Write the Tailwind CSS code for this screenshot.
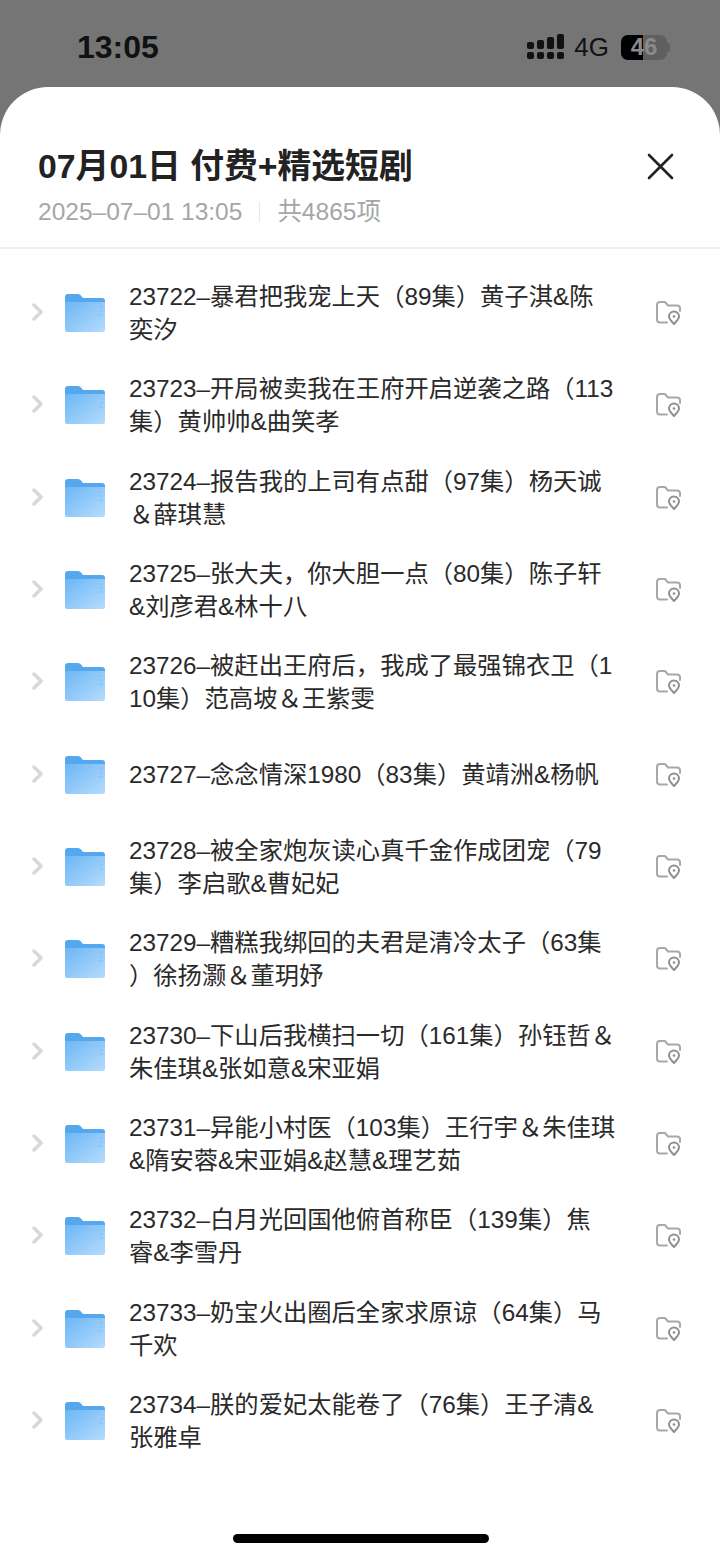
<!DOCTYPE html>
<html lang="zh-CN">
<head>
    <meta charset="UTF-8">
    <meta name="viewport" content="width=device-width, initial-scale=1.0">
    <title>07月01日 付费+精选短剧</title>
    <script src="https://cdn.jsdelivr.net/npm/@tailwindcss/browser@4"></script>
</head>
<body class="bg-[#757575] font-['Liberation_Sans','Noto_Sans_CJK_SC',sans-serif]">
<div class="w-[720px] h-[1558px] overflow-hidden flex flex-col relative">

    <!-- status bar -->
    <div class="h-[87px] shrink-0 flex items-start justify-between pl-[77px] pr-[50px] pt-[29px] text-[#111]">
        <span class="text-[32px] leading-[37px] font-bold">13:05</span>
        <div class="flex items-center gap-[12px] pt-[5px]">
            <svg class="mr-[-2px]" width="37" height="26" viewBox="0 0 37 26" fill="#111">
                <rect x="0" y="8" width="7" height="7" rx="2"/><rect x="10" y="6" width="7" height="9" rx="2"/><rect x="20" y="3" width="7" height="12" rx="2"/><rect x="30" y="0" width="7" height="15" rx="2"/>
                <rect x="0" y="18" width="7" height="7" rx="2"/><rect x="10" y="18" width="7" height="7" rx="2"/><rect x="20" y="18" width="7" height="7" rx="2"/><rect x="30" y="18" width="7" height="7" rx="2"/>
            </svg>
            <span class="text-[26px] leading-[26px]">4G</span>
            <div class="flex items-center">
                <div class="relative w-[46px] h-[25px] rounded-[7px] bg-[#5f5f5f]">
                    <div class="w-[22px] h-full rounded-l-[7px] bg-black"></div>
                    <span class="absolute inset-0 flex items-center justify-center text-[24px] leading-none font-bold text-[#8a8a8a]">46</span>
                </div>
                <div class="w-[3px] h-[9px] rounded-r-full bg-[#5f5f5f]"></div>
            </div>
        </div>
    </div>

    <!-- sheet -->
    <div class="flex-1 bg-white rounded-t-[48px] flex flex-col relative">
        <div class="h-[162px] shrink-0 border-b-2 border-[#f0f0f0] pl-[38px] pr-[46px] pt-[57px] flex justify-between">
            <div>
                <h1 class="text-[33.800px] leading-[44px] font-bold text-[#222]">07月01日 付费+精选短剧</h1>
                <div class="mt-[9px] flex items-center text-[24.500px] leading-[30px] text-[#a6a6a6]">
                    <span>2025–07–01 13:05</span>
                    <span class="w-px h-[20px] bg-[#e8e8e8] mx-[17px]"></span>
                    <span>共4865项</span>
                </div>
            </div>
            <svg class="mt-[9px]" width="27" height="27" viewBox="0 0 27 27" fill="none" stroke="#222" stroke-width="2.6" stroke-linecap="round">
                <path d="M2 2 L25 25 M25 2 L2 25"/>
            </svg>
        </div>

        <svg width="0" height="0" class="absolute">
            <defs>
                <linearGradient id="folderBody" x1="0" y1="0" x2="1" y2="1">
                    <stop offset="0" stop-color="#6cb6f5"/>
                    <stop offset="1" stop-color="#b5dcfd"/>
                </linearGradient>
                <symbol id="folder" viewBox="0 0 40 38">
                    <path d="M0 3 a3 3 0 0 1 3-3 h10 a4 4 0 0 1 3 1.5 l2 2.5 h19 a3 3 0 0 1 3 3 v6 H0z" fill="#55a8ee"/>
                    <path d="M0 8 h40 v28 a2 2 0 0 1-2 2 H2 a2 2 0 0 1-2-2z" fill="url(#folderBody)"/>
                    <path d="M34 13 h4 M34 17 h4 M34 21 h4" stroke="#8cc4f5" stroke-width="1.5"/>
                </symbol>
                <symbol id="pinFolder" viewBox="0 0 26 24">
                    <path d="M11 21.5 H4 a3 3 0 0 1-3-3 V4 a3 3 0 0 1 3-3 h5 l3 3.5 h9 a3 3 0 0 1 3 3 V10" fill="none" stroke="#a8a8a8" stroke-width="2" stroke-linecap="round" stroke-linejoin="round"/>
                    <path d="M18 23 c-3-3-5-5-5-7.5 a5 5 0 0 1 10 0 c0 2.500-2 4.500-5 7.500z" fill="none" stroke="#8f8f8f" stroke-width="2" stroke-linejoin="round"/>
                    <circle cx="18" cy="15.500" r="1.300" fill="#8f8f8f"/>
                </symbol>
            </defs>
        </svg>

        <!-- file list -->
        <ul class="pt-[18px] flex flex-col text-[24.300px] leading-[33px] text-[#2a2a2a]">
            <li class="h-[92.330px] flex items-center">
                <svg class="ml-[32px] mb-[2px] w-[11px] h-[18px]" viewBox="0 0 11 18" fill="none" stroke="#d8d8d8" stroke-width="3.5" stroke-linecap="round" stroke-linejoin="round"><path d="M2 2 L9 9 L2 16"/></svg>
                <svg class="ml-[22px] w-[40px] h-[38px]"><use href="#folder"/></svg>
                <p class="ml-[24px] w-[512px] whitespace-nowrap">23722–暴君把我宠上天（89集）黄子淇&amp;陈<br>奕汐</p>
                <svg class="ml-[15px] w-[26px] h-[24px]"><use href="#pinFolder"/></svg>
            </li>
            <li class="h-[92.330px] flex items-center">
                <svg class="ml-[32px] mb-[2px] w-[11px] h-[18px]" viewBox="0 0 11 18" fill="none" stroke="#d8d8d8" stroke-width="3.5" stroke-linecap="round" stroke-linejoin="round"><path d="M2 2 L9 9 L2 16"/></svg>
                <svg class="ml-[22px] w-[40px] h-[38px]"><use href="#folder"/></svg>
                <p class="ml-[24px] w-[512px] whitespace-nowrap">23723–开局被卖我在王府开启逆袭之路（113<br>集）黄帅帅&amp;曲笑孝</p>
                <svg class="ml-[15px] w-[26px] h-[24px]"><use href="#pinFolder"/></svg>
            </li>
            <li class="h-[92.330px] flex items-center">
                <svg class="ml-[32px] mb-[2px] w-[11px] h-[18px]" viewBox="0 0 11 18" fill="none" stroke="#d8d8d8" stroke-width="3.5" stroke-linecap="round" stroke-linejoin="round"><path d="M2 2 L9 9 L2 16"/></svg>
                <svg class="ml-[22px] w-[40px] h-[38px]"><use href="#folder"/></svg>
                <p class="ml-[24px] w-[512px] whitespace-nowrap">23724–报告我的上司有点甜（97集）杨天诚<br>＆薛琪慧</p>
                <svg class="ml-[15px] w-[26px] h-[24px]"><use href="#pinFolder"/></svg>
            </li>
            <li class="h-[92.330px] flex items-center">
                <svg class="ml-[32px] mb-[2px] w-[11px] h-[18px]" viewBox="0 0 11 18" fill="none" stroke="#d8d8d8" stroke-width="3.5" stroke-linecap="round" stroke-linejoin="round"><path d="M2 2 L9 9 L2 16"/></svg>
                <svg class="ml-[22px] w-[40px] h-[38px]"><use href="#folder"/></svg>
                <p class="ml-[24px] w-[512px] whitespace-nowrap">23725–张大夫，你大胆一点（80集）陈子轩<br>&amp;刘彦君&amp;林十八</p>
                <svg class="ml-[15px] w-[26px] h-[24px]"><use href="#pinFolder"/></svg>
            </li>
            <li class="h-[92.330px] flex items-center">
                <svg class="ml-[32px] mb-[2px] w-[11px] h-[18px]" viewBox="0 0 11 18" fill="none" stroke="#d8d8d8" stroke-width="3.5" stroke-linecap="round" stroke-linejoin="round"><path d="M2 2 L9 9 L2 16"/></svg>
                <svg class="ml-[22px] w-[40px] h-[38px]"><use href="#folder"/></svg>
                <p class="ml-[24px] w-[512px] whitespace-nowrap">23726–被赶出王府后，我成了最强锦衣卫（1<br>10集）范高坡＆王紫雯</p>
                <svg class="ml-[15px] w-[26px] h-[24px]"><use href="#pinFolder"/></svg>
            </li>
            <li class="h-[92.330px] flex items-center">
                <svg class="ml-[32px] mb-[2px] w-[11px] h-[18px]" viewBox="0 0 11 18" fill="none" stroke="#d8d8d8" stroke-width="3.5" stroke-linecap="round" stroke-linejoin="round"><path d="M2 2 L9 9 L2 16"/></svg>
                <svg class="ml-[22px] w-[40px] h-[38px]"><use href="#folder"/></svg>
                <p class="ml-[24px] w-[512px] whitespace-nowrap">23727–念念情深1980（83集）黄靖洲&amp;杨帆</p>
                <svg class="ml-[15px] w-[26px] h-[24px]"><use href="#pinFolder"/></svg>
            </li>
            <li class="h-[92.330px] flex items-center">
                <svg class="ml-[32px] mb-[2px] w-[11px] h-[18px]" viewBox="0 0 11 18" fill="none" stroke="#d8d8d8" stroke-width="3.5" stroke-linecap="round" stroke-linejoin="round"><path d="M2 2 L9 9 L2 16"/></svg>
                <svg class="ml-[22px] w-[40px] h-[38px]"><use href="#folder"/></svg>
                <p class="ml-[24px] w-[512px] whitespace-nowrap">23728–被全家炮灰读心真千金作成团宠（79<br>集）李启歌&amp;曹妃妃</p>
                <svg class="ml-[15px] w-[26px] h-[24px]"><use href="#pinFolder"/></svg>
            </li>
            <li class="h-[92.330px] flex items-center">
                <svg class="ml-[32px] mb-[2px] w-[11px] h-[18px]" viewBox="0 0 11 18" fill="none" stroke="#d8d8d8" stroke-width="3.5" stroke-linecap="round" stroke-linejoin="round"><path d="M2 2 L9 9 L2 16"/></svg>
                <svg class="ml-[22px] w-[40px] h-[38px]"><use href="#folder"/></svg>
                <p class="ml-[24px] w-[512px] whitespace-nowrap">23729–糟糕我绑回的夫君是清冷太子（63集<br>）徐扬灏＆董玥妤</p>
                <svg class="ml-[15px] w-[26px] h-[24px]"><use href="#pinFolder"/></svg>
            </li>
            <li class="h-[92.330px] flex items-center">
                <svg class="ml-[32px] mb-[2px] w-[11px] h-[18px]" viewBox="0 0 11 18" fill="none" stroke="#d8d8d8" stroke-width="3.5" stroke-linecap="round" stroke-linejoin="round"><path d="M2 2 L9 9 L2 16"/></svg>
                <svg class="ml-[22px] w-[40px] h-[38px]"><use href="#folder"/></svg>
                <p class="ml-[24px] w-[512px] whitespace-nowrap">23730–下山后我横扫一切（161集）孙钰哲＆<br>朱佳琪&amp;张如意&amp;宋亚娟</p>
                <svg class="ml-[15px] w-[26px] h-[24px]"><use href="#pinFolder"/></svg>
            </li>
            <li class="h-[92.330px] flex items-center">
                <svg class="ml-[32px] mb-[2px] w-[11px] h-[18px]" viewBox="0 0 11 18" fill="none" stroke="#d8d8d8" stroke-width="3.5" stroke-linecap="round" stroke-linejoin="round"><path d="M2 2 L9 9 L2 16"/></svg>
                <svg class="ml-[22px] w-[40px] h-[38px]"><use href="#folder"/></svg>
                <p class="ml-[24px] w-[512px] whitespace-nowrap">23731–异能小村医（103集）王行宇＆朱佳琪<br>&amp;隋安蓉&amp;宋亚娟&amp;赵慧&amp;理艺茹</p>
                <svg class="ml-[15px] w-[26px] h-[24px]"><use href="#pinFolder"/></svg>
            </li>
            <li class="h-[92.330px] flex items-center">
                <svg class="ml-[32px] mb-[2px] w-[11px] h-[18px]" viewBox="0 0 11 18" fill="none" stroke="#d8d8d8" stroke-width="3.5" stroke-linecap="round" stroke-linejoin="round"><path d="M2 2 L9 9 L2 16"/></svg>
                <svg class="ml-[22px] w-[40px] h-[38px]"><use href="#folder"/></svg>
                <p class="ml-[24px] w-[512px] whitespace-nowrap">23732–白月光回国他俯首称臣（139集）焦<br>睿&amp;李雪丹</p>
                <svg class="ml-[15px] w-[26px] h-[24px]"><use href="#pinFolder"/></svg>
            </li>
            <li class="h-[92.330px] flex items-center">
                <svg class="ml-[32px] mb-[2px] w-[11px] h-[18px]" viewBox="0 0 11 18" fill="none" stroke="#d8d8d8" stroke-width="3.5" stroke-linecap="round" stroke-linejoin="round"><path d="M2 2 L9 9 L2 16"/></svg>
                <svg class="ml-[22px] w-[40px] h-[38px]"><use href="#folder"/></svg>
                <p class="ml-[24px] w-[512px] whitespace-nowrap">23733–奶宝火出圈后全家求原谅（64集）马<br>千欢</p>
                <svg class="ml-[15px] w-[26px] h-[24px]"><use href="#pinFolder"/></svg>
            </li>
            <li class="h-[92.330px] flex items-center">
                <svg class="ml-[32px] mb-[2px] w-[11px] h-[18px]" viewBox="0 0 11 18" fill="none" stroke="#d8d8d8" stroke-width="3.5" stroke-linecap="round" stroke-linejoin="round"><path d="M2 2 L9 9 L2 16"/></svg>
                <svg class="ml-[22px] w-[40px] h-[38px]"><use href="#folder"/></svg>
                <p class="ml-[24px] w-[512px] whitespace-nowrap">23734–朕的爱妃太能卷了（76集）王子清&amp;<br>张雅卓</p>
                <svg class="ml-[15px] w-[26px] h-[24px]"><use href="#pinFolder"/></svg>
            </li>
        </ul>

        <!-- home indicator -->
        <div class="absolute bottom-[15px] left-[233px] w-[256px] h-[9px] rounded-full bg-black"></div>
    </div>
</div>
</body>
</html>
